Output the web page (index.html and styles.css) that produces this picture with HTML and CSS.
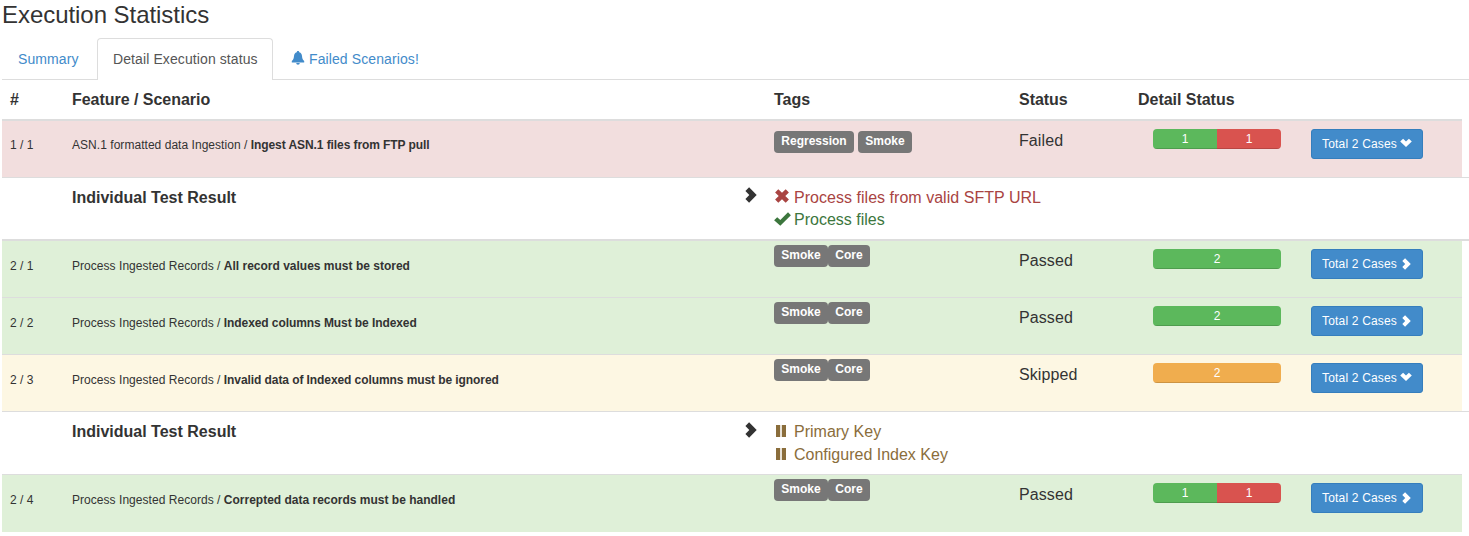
FILE: index.html
```html
<!DOCTYPE html>
<html lang="en">
<head>
<meta charset="utf-8">
<title>Execution Statistics</title>
<link rel="stylesheet" href="styles.css">
</head>
<body>
<svg class="defs" width="0" height="0">
  <symbol id="right" viewBox="0 0 12 16"><path d="M4.100.3 11.700 8 4.100 15.700.4 12 4.300 8 .4 4z"/></symbol>
  <symbol id="down" viewBox="0 0 12 8"><path d="M.2 3.100 3.100.2 6 3.100 8.900.2 11.800 3.100 6 8.400z"/></symbol>
  <symbol id="bell" viewBox="0 0 14 14"><path d="M7 0C6.200 0 5.800.5 5.800 1.200 3.800 1.800 3.200 3.300 3 5 2.700 7.600 2.400 8.600.8 10v1.400h12.400V10c-1.600-1.400-1.900-2.400-2.200-5-.2-1.700-.8-3.200-2.800-3.800C8.200.5 7.800 0 7 0zM5.200 12h3.600a1.800 1.800 0 0 1-3.600 0z"/></symbol>
  <symbol id="cross" viewBox="0 0 14 14"><path d="M3.300.2 7 3.800 10.700.2 13.900 3.400 10.300 7 13.900 10.600 10.700 13.800 7 10.200 3.300 13.800.1 10.600 3.700 7 .1 3.400z"/></symbol>
  <symbol id="check" viewBox="0 0 17 14"><path d="M14 .3 16.900 3.200 6.300 13.800.1 8.300 3.200 5.200 6.300 8z"/></symbol>
  <symbol id="pause" viewBox="0 0 10 12"><path d="M0 0h4.200v12H0zM5.800 0H10v12H5.800z"/></symbol>
</svg>
<h1 class="title">Execution Statistics</h1>
<nav class="tabs">
  <a class="tab summary">Summary</a>
  <a class="tab active">Detail Execution status</a>
  <a class="tab failed-tab"><svg class="bell"><use href="#bell"/></svg>Failed Scenarios!</a>
</nav>
<main class="table">
  <div class="row head"><div>#</div><div>Feature / Scenario</div><div>Tags</div><div>Status</div><div>Detail Status</div></div>

  <div class="row danger thick">
    <div class="num">1 / 1</div>
    <div class="name"><span class="feature">ASN.1 formatted data Ingestion / </span><b class="snug">Ingest ASN.1 files from FTP pull</b></div>
    <div class="tags spaced"><span class="label regression">Regression</span><span class="label smoke">Smoke</span></div>
    <div class="status">Failed</div>
    <div class="detail"><div class="progress"><span class="ok">1</span><span class="bad">1</span></div><button class="btn">Total 2 Cases<svg class="down"><use href="#down"/></svg></button></div>
  </div>

  <div class="result first">
    <div class="result-title">Individual Test Result</div>
    <svg class="arrow"><use href="#right"/></svg>
    <div class="steps">
      <div class="step fail"><svg class="cross"><use href="#cross"/></svg>Process files from valid SFTP URL</div>
      <div class="step pass"><svg class="check"><use href="#check"/></svg>Process files</div>
    </div>
  </div>

  <div class="row success flush">
    <div class="num">2 / 1</div>
    <div class="name"><span class="feature">Process Ingested Records / </span><b>All record values must be stored</b></div>
    <div class="tags"><span class="label smoke">Smoke</span><span class="label core">Core</span></div>
    <div class="status">Passed</div>
    <div class="detail"><div class="progress"><span class="ok">2</span></div><button class="btn">Total 2 Cases<svg class="right"><use href="#right"/></svg></button></div>
  </div>

  <div class="row success">
    <div class="num">2 / 2</div>
    <div class="name"><span class="feature">Process Ingested Records / </span><b class="snug">Indexed columns Must be Indexed</b></div>
    <div class="tags"><span class="label smoke">Smoke</span><span class="label core">Core</span></div>
    <div class="status">Passed</div>
    <div class="detail"><div class="progress"><span class="ok">2</span></div><button class="btn">Total 2 Cases<svg class="right"><use href="#right"/></svg></button></div>
  </div>

  <div class="row warning">
    <div class="num">2 / 3</div>
    <div class="name"><span class="feature">Process Ingested Records / </span><b class="snug">Invalid data of Indexed columns must be ignored</b></div>
    <div class="tags"><span class="label smoke">Smoke</span><span class="label core">Core</span></div>
    <div class="status">Skipped</div>
    <div class="detail"><div class="progress"><span class="warn">2</span></div><button class="btn">Total 2 Cases<svg class="down"><use href="#down"/></svg></button></div>
  </div>

  <div class="result second">
    <div class="result-title">Individual Test Result</div>
    <svg class="arrow"><use href="#right"/></svg>
    <div class="steps">
      <div class="step skip"><svg class="pause"><use href="#pause"/></svg>Primary Key</div>
      <div class="step skip"><svg class="pause"><use href="#pause"/></svg>Configured Index Key</div>
    </div>
  </div>

  <div class="row success last">
    <div class="num">2 / 4</div>
    <div class="name"><span class="feature">Process Ingested Records / </span><b>Correpted data records must be handled</b></div>
    <div class="tags"><span class="label smoke">Smoke</span><span class="label core">Core</span></div>
    <div class="status">Passed</div>
    <div class="detail"><div class="progress"><span class="ok">1</span><span class="bad">1</span></div><button class="btn">Total 2 Cases<svg class="right"><use href="#right"/></svg></button></div>
  </div>
</main>
</body>
</html>
```
FILE: styles.css
```css
* { box-sizing: border-box; }
body { margin: 0; padding-left: 2px; background: #fff; color: #333; font: 16px/22px "Liberation Sans", Arial, sans-serif; overflow: hidden; }
svg { fill: currentColor; flex: none; }
.defs { display: block; }
.title { height: 38px; margin: 0; padding-top: 1px; font-size: 24px; line-height: 28px; font-weight: 400; letter-spacing: -.05px; }
.tabs { display: flex; height: 42px; border-bottom: 1px solid #ddd; font-size: 14px; line-height: 20px; letter-spacing: .1px; }
.tab { height: 41px; padding: 11px 15px 0 16px; color: #428bca; white-space: nowrap; }
.summary { width: 95px; }
.tab.active { width: 176px; height: 42px; padding: 10px 0 0 15px; border: 1px solid #ddd; border-bottom: 0; border-radius: 4px 4px 0 0; background: #fff; color: #555; }
.failed-tab { display: flex; padding-left: 18px; }
.bell { width: 14px; height: 14px; margin: 2px 4px 0 0; }
.row { display: grid; grid-template-columns: 62px 702px 245px 119px 1fr; width: 1460px; height: 57px; border-top: 1px solid #ddd; white-space: nowrap; }
.row > div { padding-left: 8px; }
.row.head { height: 39px; border: 0; padding-top: 9px; font-weight: 700; letter-spacing: -.03px; }
.row.thick { height: 58px; border-top-width: 2px; }
.row.flush { height: 56px; border-top: 0; }
.row.last { height: 58px; }
.danger { background: #f2dede; }
.success { background: #dff0d8; }
.warning { background: #fdf7e3; }
.num, .name { padding-top: 17px; font-size: 12px; line-height: 17px; }
.thick .num, .thick .name { padding-top: 16px; }
.feature { letter-spacing: .04px; }
.snug { letter-spacing: -.08px; }
.tags { display: flex; align-items: flex-start; padding-top: 4px; }
.tags.spaced { gap: 4px; padding-top: 10px; }
.label { height: 22px; border-radius: 4px; background: #777; color: #fff; font-size: 12px; line-height: 21px; font-weight: 700; text-align: center; }
.regression { width: 80px; }
.smoke { width: 54px; }
.core { width: 42px; }
.status { padding-top: 9px; letter-spacing: .1px; }
.row > .detail { display: flex; align-items: flex-start; gap: 30px; padding: 8px 0 0 23px; }
.progress { display: flex; width: 128px; height: 20px; border-radius: 4px; overflow: hidden; color: #fff; font-size: 12px; line-height: 20px; text-align: center; }
.progress span { flex: 1; box-shadow: inset 0 -1px 0 rgba(0,0,0,.15); }
.ok { background: #5cb85c; }
.bad { background: #d9534f; }
.warn { background: #f0ad4e; }
.btn { display: flex; width: 112px; height: 30px; padding: 0 0 0 10px; border: 1px solid #357ebd; border-radius: 3px; background: #428bca; color: #fff; font: 12px/28px "Liberation Sans", Arial, sans-serif; letter-spacing: .18px; white-space: nowrap; }
.btn .down { width: 12px; height: 9px; margin: 8px 0 0 3px; }
.btn .right { width: 9px; height: 12px; margin: 8px 0 0 5px; }
.result { display: grid; grid-template-columns: 673px 29px 1fr; width: 1467px; height: 63px; padding: 9px 0 0 70px; border-top: 1px solid #ddd; }
.result.first { height: 64px; border-bottom: 2px solid #ddd; }
.result-title { font-weight: 700; }
.arrow { width: 12px; height: 16px; }
.second .arrow { margin-top: 1px; }
.step { display: flex; height: 22px; }
.second .step { height: 23px; }
.fail { color: #a94442; letter-spacing: .03px; }
.pass { color: #3c763d; }
.skip { color: #8a6d3b; }
.cross { width: 14px; height: 14px; margin: 2px 5px 0 1px; }
.check { width: 17px; height: 14px; margin: 3px 3px 0 0; }
.pause { width: 10px; height: 12px; margin: 4px 8px 0 2px; }
```
